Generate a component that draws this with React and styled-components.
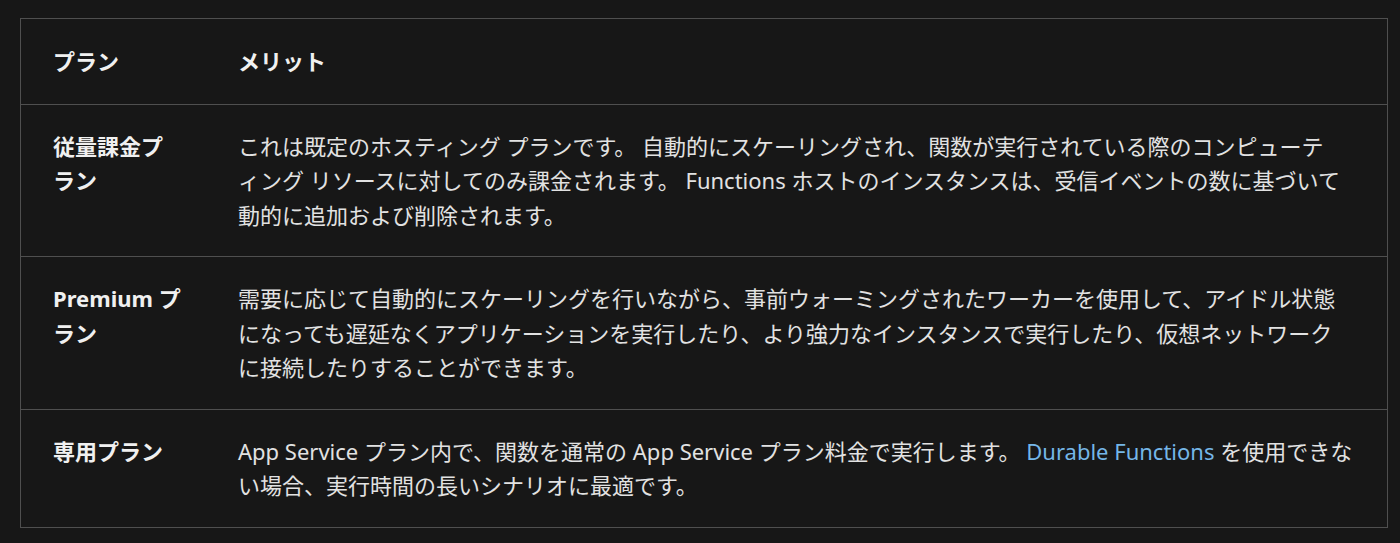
import styled, { createGlobalStyle } from "styled-components"

const GlobalStyle = createGlobalStyle`
body {
  margin: 0;
  background: #171717;
}
`

const Page = styled.div`
padding: 18px 12px 16px 20px;
background: #171717;
font-family: "Noto Sans", "Noto Sans CJK JP", sans-serif;
`

const Table = styled.table`
width: 100%;
border-collapse: collapse;
table-layout: fixed;
border: 1px solid #4f4f4f;
color: #e2e2e2;
font-size: 22px;
line-height: 34.5px;
`

const HeadCell = styled.th`
text-align: left;
font-weight: 700;
color: #f0f0f0;
padding: 25px 44px 25px 32px;
border-bottom: 1px solid #4f4f4f;
width: ${p => p.$w || "auto"};
`

const NameHeadCell = styled(HeadCell)`
padding-right: 24px;
`

const Row = styled.tr`
border-top: 1px solid #4f4f4f;
`

const PlanCell = styled.td`
vertical-align: top;
font-weight: 700;
color: #f0f0f0;
padding: 24px 24px 24px 32px;
`

const TextCell = styled.td`
vertical-align: top;
padding: 24px ${p => p.$pr || 44}px 24px 32px;
`

const Link = styled.a`
color: #75b6e7;
text-decoration: none;
`

const plans = [
  {
    name: "従量課金プラン",
    text: "これは既定のホスティング プランです。 自動的にスケーリングされ、関数が実行されている際のコンピューティング リソースに対してのみ課金されます。 Functions ホストのインスタンスは、受信イベントの数に基づいて動的に追加および削除されます。",
  },
  {
    name: "Premium プラン",
    text: "需要に応じて自動的にスケーリングを行いながら、事前ウォーミングされたワーカーを使用して、アイドル状態になっても遅延なくアプリケーションを実行したり、より強力なインスタンスで実行したり、仮想ネットワークに接続したりすることができます。",
  },
]

const App = () => {
  return (
    <Page>
      <GlobalStyle />
      <Table>
        <thead>
          <tr>
            <NameHeadCell $w="129px">プラン</NameHeadCell>
            <HeadCell>メリット</HeadCell>
          </tr>
        </thead>
        <tbody>
          {plans.map(p => (
            <Row key={p.name}>
              <PlanCell>{p.name}</PlanCell>
              <TextCell>{p.text}</TextCell>
            </Row>
          ))}
          <Row>
            <PlanCell>専用プラン</PlanCell>
            <TextCell $pr={33}>
              App Service プラン内で、関数を通常の App Service プラン料金で実行します。 <Link href="#">Durable Functions</Link> を使用できない場合、実行時間の長いシナリオに最適です。
            </TextCell>
          </Row>
        </tbody>
      </Table>
    </Page>
  )
}

export default App
